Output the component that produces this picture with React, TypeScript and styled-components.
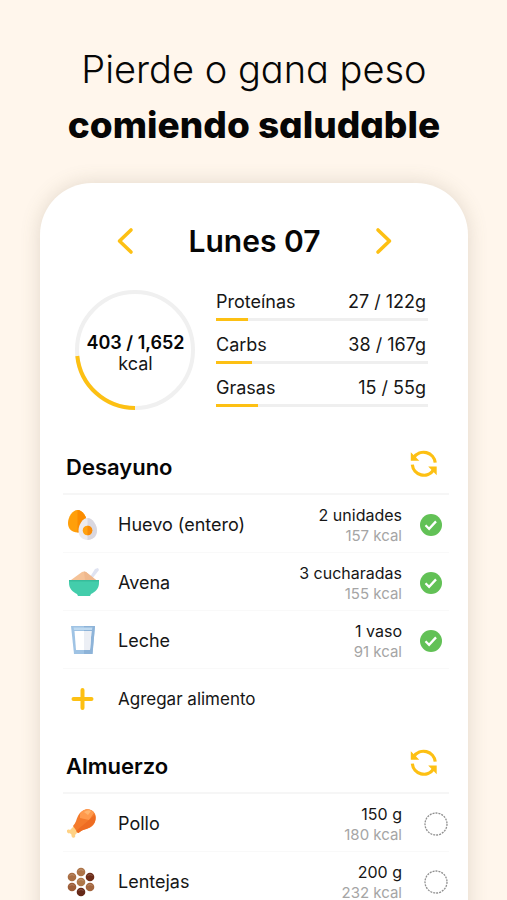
import React, { useState } from "react";
import styled, { createGlobalStyle } from "styled-components";

const YELLOW = "#fdc013";

const GlobalStyle = createGlobalStyle`
  * { box-sizing: border-box; }
  body {
    margin: 0;
    background: #fff6ec;
    color: #161616;
    font-family: Inter, "Liberation Sans", sans-serif;
  }
  button { font: inherit; color: inherit; background: none; border: 0; padding: 0; cursor: pointer; }
  svg { display: block; }
`;

const Page = styled.main`
  height: 100vh;
  overflow: hidden;
  padding: 41px 39px 0 40px;
`;

const Headline = styled.h1`
  margin: 0 0 30px;
  text-align: center;
  font-size: 38px;
  line-height: 56px;
  font-weight: 300;
  color: #060606;
  white-space: nowrap;
  font-feature-settings: "cv11";
`;

const Strong = styled.strong`
  display: block;
  font-size: 37px;
  font-weight: 800;
`;

const Card = styled.section`
  min-height: 100vh;
  padding: 40px 19px 24px 23px;
  border-radius: 52px 52px 0 0;
  background: #fff;
  box-shadow: 0 0 20px rgba(110, 100, 70, 0.2);
`;

const DayNav = styled.nav`
  display: flex;
  align-items: center;
  justify-content: space-between;
  padding: 0 55px 0 52px;
`;

const Day = styled.h2`
  margin: 0;
  font-size: 30px;
  line-height: 36px;
  font-weight: 600;
  color: #060606;
`;

const Summary = styled.div`
  display: flex;
  align-items: center;
  gap: 20px;
  margin-top: 30px;
  padding: 0 21px 0 12px;
`;

const Ring = styled.div`
  display: grid;
  flex: none;
  width: 121px;
  height: 122px;
  place-items: center;
  & > * { grid-area: 1 / 1; }
`;

const RingText = styled.div`
  text-align: center;
  font-size: 18px;
  line-height: 21px;
  margin-top: 6px;
  b { display: block; font-weight: 600; color: #060606; }
`;

const Macros = styled.div`
  flex: 1;
  display: grid;
  gap: 13px;
  margin-bottom: 2px;
`;

const MacroLine = styled.div`
  display: flex;
  justify-content: space-between;
  padding: 0 2px 5px 0;
  font-size: 18px;
  line-height: 22px;
`;

const Track = styled.div`
  height: 3px;
  background: #efefef;
`;

const Fill = styled.div`
  height: 3px;
  background: ${YELLOW};
`;

const Meal = styled.section<{ $first?: boolean }>`
  margin-top: ${(p) => (p.$first ? 33 : 14)}px;
`;

const MealHead = styled.header`
  display: flex;
  align-items: center;
  justify-content: space-between;
  height: 51px;
  padding: 0 11px 10px 3px;
  border-bottom: 2px solid #f6f6f6;
`;

const MealTitle = styled.h3`
  margin: 0;
  padding-top: 6px;
  font-size: 22px;
  line-height: 28px;
  font-weight: 600;
  color: #060606;
`;

const Foods = styled.ul`
  margin: 0;
  padding: 0;
  list-style: none;
`;

const Food = styled.li`
  display: flex;
  align-items: center;
  height: 58px;
  padding-top: 2px;
  border-bottom: 1px solid #f9f9f9;
`;

const Picture = styled.span`
  flex: none;
  width: 55px;
  padding-left: 4px;
`;

const Name = styled.label`
  flex: 1;
  font-size: 18px;
  line-height: 24px;
`;

const Amount = styled.div`
  padding-top: 2px;
  text-align: right;
  font-size: 16px;
  line-height: 21px;
  margin-right: 11px;
`;

const Kcal = styled.div`
  font-size: 15px;
  line-height: 20px;
  color: #a5a5a5;
`;

const Tick = styled.label<{ $on: boolean }>`
  display: flex;
  flex: none;
  width: 35px;
  justify-content: ${(p) => (p.$on ? "center" : "flex-end")};
  margin-right: 1px;
  cursor: pointer;
`;

const TickInput = styled.input`
  appearance: none;
  width: 0;
  height: 0;
  margin: 0;
`;

const AddButton = styled.button`
  display: flex;
  align-items: center;
  width: 100%;
  height: 60px;
  text-align: left;
  && { font-size: 17px; }
`;

function Chevron({ next }: { next?: boolean }) {
  return (
    <svg width="20" height="28" viewBox="0 0 20 28" fill="none" stroke={YELLOW} strokeWidth="3.6" strokeLinecap="round" strokeLinejoin="round">
      <path d={next ? "M4 3 15.500 14 4 25" : "M16 3 4.500 14 16 25"} />
    </svg>
  );
}

function Refresh() {
  return (
    <svg width="28" height="28" viewBox="0 0 28 28" fill="none">
      <path d="M4 7.500A11.600 11.600 0 0 1 25.200 12.700M2.300 14.700A11.600 11.600 0 0 0 23.500 20" stroke={YELLOW} strokeWidth="3.200" />
      <path d="M.8 2.200V10.800H9.300ZM26.700 25.300V16.600H18.200Z" fill={YELLOW} />
    </svg>
  );
}

function Egg() {
  return (
    <svg width="32" height="32" viewBox="0 0 32 32">
      <path d="M10.500 1C5.500 1 1 8 1 14s4 9.500 9.500 9.500S20 20 20 14 15.500 1 10.500 1Z" fill="#ff9f0a" />
      <path d="M10.500 1C15.500 1 20 8 20 14s-4 9.500-9.500 9.500Z" fill="#fb8c00" />
      <path d="M20.500 9C16 9 11.500 15.500 11.500 21.500S15.500 31 20.500 31 30 27.500 30 21.500 25 9 20.500 9Z" fill="#eceaef" />
      <path d="M20.500 9C25 9 30 15.500 30 21.500S25.500 31 20.500 31Z" fill="#d9d7df" />
      <circle cx="20.500" cy="21.500" r="4.800" fill="#ffa00f" />
      <path d="M20.500 16.700a4.800 4.800 0 0 1 0 9.600Z" fill="#f98a05" />
    </svg>
  );
}

function Bowl() {
  return (
    <svg width="34" height="32" viewBox="0 0 34 32">
      <path d="m23 10 5-8 3-1 1 2-7 9Z" fill="#dfe3f1" />
      <path d="M4 13 15 5q2-1 4 0l10 8Z" fill="#f5c297" />
      <path d="M17 4.500q1 0 2 .5l10 8H18Z" fill="#efb88d" />
      <path d="M2 13h30v3c0 6-4 9-8 11l-1 2H11l-1-2C6 25 2 22 2 16Z" fill="#43cdab" />
      <path d="M2 13h30v1.500H2Z" fill="#37bc9b" />
    </svg>
  );
}

function Glass() {
  return (
    <svg width="32" height="32" viewBox="0 0 32 32">
      <path d="M4 1h24l-2.500 28H7Z" fill="#9fc3e4" />
      <path d="M17 1h11l-2.500 28H17Z" fill="#8db3d8" />
      <path d="M6.500 2.500h19L25 5H7Z" fill="#bfdaf0" />
      <path d="M7.500 6h17l-1.500 19H9Z" fill="#fff" />
      <path d="M17 6h7.500L23 25h-6Z" fill="#eceff5" />
    </svg>
  );
}

function Chicken() {
  return (
    <svg width="32" height="32" viewBox="0 0 32 32">
      <path d="m7 18 5 5-4 4c1 2-1 4-3 2-1-1 0-2-1-3s-3 0-4-2 1-3 3-2Z" fill="#ffd285" />
      <path d="M6 18c3-3 3-6 5-10C14 2 20 0 24 2c4 2 6 6 4 12-2 5-7 7-12 8-3 1-4 3-5 3Z" fill="#f47a2b" />
      <path d="M13 6c3-6 11-6 14-1l-5 7-9-2Z" fill="#ff9a4d" />
      <path d="m22 12 6-5c2 7-2 12-12 15-3 1-4 3-5 3l-2-2Z" fill="#ee6c22" />
      <path d="M17 4q4-3 7-1l-3 4Z" fill="#ffb56e" />
    </svg>
  );
}

function Lentils() {
  const beans: [number, number, string][] = [
    [14, 5, "#ad7448"],
    [5, 10, "#a96e43"],
    [23, 10, "#6d2c18"],
    [14, 15, "#ae7749"],
    [5, 20, "#9d5e39"],
    [23, 20, "#a3663f"],
    [14, 25, "#652817"],
  ];
  return (
    <svg width="28" height="30" viewBox="0 0 28 30">
      {beans.map(([x, y, color]) => (
        <g key={`${x}-${y}`}>
          <circle cx={x} cy={y} r="4.300" fill={color} />
          <path d={`M${x - 2.5} ${y - 1.5}q2.500-2 5 0`} stroke="#fff" strokeOpacity=".2" fill="none" />
        </g>
      ))}
    </svg>
  );
}

function Plus() {
  return (
    <svg width="32" height="24" viewBox="0 0 32 24" stroke={YELLOW} strokeWidth="4" strokeLinecap="round">
      <path d="M6.500 12h18M15.500 3v18" />
    </svg>
  );
}

function TickMark({ on }: { on: boolean }) {
  return on ? (
    <svg width="22" height="22" viewBox="0 0 22 22" fill="none">
      <circle cx="11" cy="11" r="11" fill="#62c156" />
      <path d="m5.500 11.300 3.600 3.500 6.900-7.400" stroke="#fff" strokeWidth="2.300" />
    </svg>
  ) : (
    <svg width="24" height="24" viewBox="0 0 24 24" fill="none">
      <circle cx="12" cy="12" r="11" stroke="#8f8f8f" strokeWidth="1.300" strokeDasharray="2 1" />
    </svg>
  );
}

interface FoodItem {
  id: string;
  name: string;
  amount: string;
  kcal: number;
  icon: React.ReactNode;
  eaten: boolean;
}

const breakfast: FoodItem[] = [
  { id: "huevo", name: "Huevo (entero)", amount: "2 unidades", kcal: 157, icon: <Egg />, eaten: true },
  { id: "avena", name: "Avena", amount: "3 cucharadas", kcal: 155, icon: <Bowl />, eaten: true },
  { id: "leche", name: "Leche", amount: "1 vaso", kcal: 91, icon: <Glass />, eaten: true },
];

const lunch: FoodItem[] = [
  { id: "pollo", name: "Pollo", amount: "150 g", kcal: 180, icon: <Chicken />, eaten: false },
  { id: "lentejas", name: "Lentejas", amount: "200 g", kcal: 232, icon: <Lentils />, eaten: false },
];

const macros = [
  { name: "Proteínas", value: "27 / 122g", share: 15 },
  { name: "Carbs", value: "38 / 167g", share: 17 },
  { name: "Grasas", value: "15 / 55g", share: 20 },
];

function FoodRow({ item }: { item: FoodItem }) {
  const [on, setOn] = useState(item.eaten);
  return (
    <Food>
      <Picture>{item.icon}</Picture>
      <Name htmlFor={item.id}>{item.name}</Name>
      <Amount>
        {item.amount}
        <Kcal>{item.kcal} kcal</Kcal>
      </Amount>
      <Tick $on={on}>
        <TickInput id={item.id} type="checkbox" checked={on} onChange={() => setOn(!on)} />
        <TickMark on={on} />
      </Tick>
    </Food>
  );
}

function MealSection({ title, items, first, addable }: { title: string; items: FoodItem[]; first?: boolean; addable?: boolean }) {
  return (
    <Meal $first={first}>
      <MealHead>
        <MealTitle>{title}</MealTitle>
        <button aria-label={`Cambiar ${title}`}><Refresh /></button>
      </MealHead>
      <Foods>
        {items.map((item) => <FoodRow key={item.id} item={item} />)}
      </Foods>
      {addable && (
        <AddButton>
          <Picture><Plus /></Picture>
          Agregar alimento
        </AddButton>
      )}
    </Meal>
  );
}

export default function App() {
  return (
    <Page>
      <GlobalStyle />
      <Headline>
        Pierde o gana peso
        <Strong>comiendo saludable</Strong>
      </Headline>
      <Card>
        <DayNav>
          <button aria-label="Día anterior"><Chevron /></button>
          <Day>Lunes 07</Day>
          <button aria-label="Día siguiente"><Chevron next /></button>
        </DayNav>
        <Summary>
          <Ring>
            <svg width="121" height="122" viewBox="0 0 121 122" fill="none" strokeWidth="4">
              <circle cx="60" cy="61" r="58" stroke="#f0f0f0" />
              <path d="M60 119A58 58 0 0 1 2.300 67" stroke={YELLOW} />
            </svg>
            <RingText><b>403 / 1,652</b>kcal</RingText>
          </Ring>
          <Macros>
            {macros.map((m) => (
              <div key={m.name}>
                <MacroLine><span>{m.name}</span><span>{m.value}</span></MacroLine>
                <Track><Fill style={{ width: `${m.share}%` }} /></Track>
              </div>
            ))}
          </Macros>
        </Summary>
        <MealSection title="Desayuno" items={breakfast} first addable />
        <MealSection title="Almuerzo" items={lunch} />
      </Card>
    </Page>
  );
}
